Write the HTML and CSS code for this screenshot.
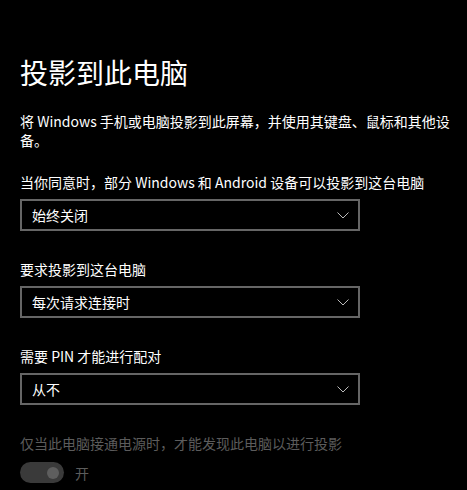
FILE: index.html
```html
<!DOCTYPE html>
<html lang="zh-CN">
<head>
    <meta charset="UTF-8">
    <meta name="viewport" content="width=device-width, initial-scale=1.0">
    <title>投影到此电脑</title>
    <link rel="stylesheet" href="styles.css">
</head>
<body>
    <div class="page">
        <h1 class="title">投影到此电脑</h1>
        <p class="desc">将 Windows 手机或电脑投影到此屏幕，并使用其键盘、鼠标和其他设备。</p>

        <div class="setting">
            <div class="label">当你同意时，部分 Windows 和 Android 设备可以投影到这台电脑</div>
            <div class="select">
                <span>始终关闭</span>
                <svg class="chevron" width="12" height="7" viewBox="0 0 12 7"><path d="M0.5 0.5 L6 6 L11.5 0.5" fill="none" stroke="#bbb" stroke-width="1"/></svg>
            </div>
        </div>

        <div class="setting">
            <div class="label">要求投影到这台电脑</div>
            <div class="select">
                <span>每次请求连接时</span>
                <svg class="chevron" width="12" height="7" viewBox="0 0 12 7"><path d="M0.5 0.5 L6 6 L11.5 0.5" fill="none" stroke="#bbb" stroke-width="1"/></svg>
            </div>
        </div>

        <div class="setting">
            <div class="label">需要 PIN 才能进行配对</div>
            <div class="select">
                <span>从不</span>
                <svg class="chevron" width="12" height="7" viewBox="0 0 12 7"><path d="M0.5 0.5 L6 6 L11.5 0.5" fill="none" stroke="#bbb" stroke-width="1"/></svg>
            </div>
        </div>

        <div class="setting disabled">
            <div class="label">仅当此电脑接通电源时，才能发现此电脑以进行投影</div>
            <div class="toggle-row">
                <div class="toggle"><div class="knob"></div></div>
                <span>开</span>
            </div>
        </div>
    </div>
</body>
</html>
```

FILE: styles.css
```css
body {
    margin: 0;
    background-color: #000;
    color: #fff;
    font-family: "Noto Sans CJK SC", "Noto Sans", sans-serif;
    overflow: hidden;
}
.page {
    padding: 52px 20px 0 20px;
}
.title {
    margin: 0;
    font-size: 28px;
    font-weight: normal;
    line-height: 40px;
}
.desc {
    margin: 20px 0 0 0;
    font-size: 14px;
    line-height: 19px;
    width: 432px;
}
.setting {
    margin-top: 22px;
}
.setting + .setting {
    margin-top: 28px;
}
.label {
    font-size: 14px;
    line-height: 20px;
}
.select {
    margin-top: 7px;
    width: 340px;
    height: 32px;
    box-sizing: border-box;
    border: 2px solid #666;
    display: flex;
    align-items: center;
    justify-content: space-between;
    padding: 0 9px 0 10px;
    font-size: 14px;
}
.chevron {
    display: block;
}
.disabled .label {
    color: #5c5c5c;
}
.toggle-row {
    margin-top: 9px;
    display: flex;
    align-items: center;
    gap: 11px;
    color: #5c5c5c;
    font-size: 14px;
}
.toggle {
    width: 44px;
    height: 21px;
    border-radius: 11px;
    background-color: #3a3a3a;
    display: flex;
    align-items: center;
    justify-content: flex-end;
    padding-right: 5px;
    box-sizing: border-box;
}
.knob {
    width: 12px;
    height: 12px;
    border-radius: 50%;
    background-color: #5e5e5e;
}
```
